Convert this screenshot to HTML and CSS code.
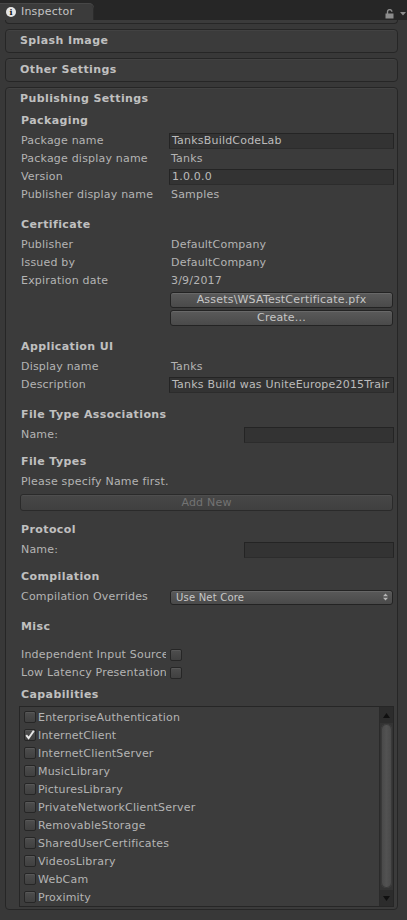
FILE: index.html
```html
<!DOCTYPE html>
<html>
<head>
<meta charset="utf-8">
<link rel="stylesheet" href="styles.css">
</head>
<body>
<div class="topbar">
  <div class="tab"><span class="info">i</span><span class="tab-label">Inspector</span></div>
  <div class="tools">
    <svg class="lock" width="10" height="10" viewBox="0 0 10 10"><path d="M2.5 5V2.8a2.2 2.2 0 0 1 4.4 0" fill="none" stroke="#8c8c8c" stroke-width="1.4"/><rect x="0.5" y="4.5" width="8" height="5" fill="#8c8c8c"/></svg>
    <svg class="menu" width="6" height="4" viewBox="0 0 6 4"><path d="M0 0H6L3 3.5Z" fill="#8c8c8c"/></svg>
  </div>
</div>
<div class="main">
  <div class="fold stub"></div>
  <div class="fold"><div class="fold-title">Splash Image</div></div>
  <div class="fold"><div class="fold-title">Other Settings</div></div>
  <div class="fold publishing">
    <div class="fold-title">Publishing Settings</div>
    <div class="content">
      <div class="h m3">Packaging</div>
      <div class="row m2"><span class="lbl">Package name</span><span class="field">TanksBuildCodeLab</span></div>
      <div class="row"><span class="lbl">Package display name</span><span class="val">Tanks</span></div>
      <div class="row"><span class="lbl">Version</span><span class="field">1.0.0.0</span></div>
      <div class="row"><span class="lbl">Publisher display name</span><span class="val">Samples</span></div>

      <div class="h m12">Certificate</div>
      <div class="row m2"><span class="lbl">Publisher</span><span class="val">DefaultCompany</span></div>
      <div class="row"><span class="lbl">Issued by</span><span class="val">DefaultCompany</span></div>
      <div class="row"><span class="lbl">Expiration date</span><span class="val">3/9/2017</span></div>
      <div class="row"><span class="lbl"></span><span class="btn">Assets\WSATestCertificate.pfx</span></div>
      <div class="row"><span class="lbl"></span><span class="btn">Create...</span></div>

      <div class="h m12">Application UI</div>
      <div class="row m2"><span class="lbl">Display name</span><span class="val">Tanks</span></div>
      <div class="row"><span class="lbl">Description</span><span class="field">Tanks Build was UniteEurope2015Trair</span></div>

      <div class="h m12">File Type Associations</div>
      <div class="row m2"><span class="lbl wide">Name:</span><span class="field empty"></span></div>

      <div class="h m9">File Types</div>
      <div class="row m2"><span class="lbl wide">Please specify Name first.</span></div>
      <div class="wide-btn">Add New</div>

      <div class="h m10">Protocol</div>
      <div class="row m2"><span class="lbl wide">Name:</span><span class="field empty"></span></div>

      <div class="h m9">Compilation</div>
      <div class="row m2"><span class="lbl">Compilation Overrides</span><span class="dropdown"><span>Use Net Core</span><svg width="5" height="8" viewBox="0 0 5 8"><path d="M0 3.2L2.5 0.5L5 3.2ZM0 4.8L2.5 7.5L5 4.8Z" fill="#b8b8b8"/></svg></span></div>

      <div class="h m12">Misc</div>
      <div class="row m10"><span class="lbl clip">Independent Input Source</span><span class="check"></span></div>
      <div class="row"><span class="lbl clip">Low Latency Presentation</span><span class="check"></span></div>

      <div class="h m4">Capabilities</div>
      <div class="list">
        <div class="items">
          <div class="item"><span class="check"></span>EnterpriseAuthentication</div>
          <div class="item"><span class="check on"><svg width="12" height="12" viewBox="0 0 12 12"><path d="M2.2 6.2L4.6 9.2L9.8 1.8" fill="none" stroke="#e8e8e8" stroke-width="2"/></svg></span>InternetClient</div>
          <div class="item"><span class="check"></span>InternetClientServer</div>
          <div class="item"><span class="check"></span>MusicLibrary</div>
          <div class="item"><span class="check"></span>PicturesLibrary</div>
          <div class="item"><span class="check"></span>PrivateNetworkClientServer</div>
          <div class="item"><span class="check"></span>RemovableStorage</div>
          <div class="item"><span class="check"></span>SharedUserCertificates</div>
          <div class="item"><span class="check"></span>VideosLibrary</div>
          <div class="item"><span class="check"></span>WebCam</div>
          <div class="item"><span class="check"></span>Proximity</div>
        </div>
        <div class="scrollbar">
          <div class="arrow up"><svg width="7" height="5" viewBox="0 0 7 5"><path d="M0 5L3.5 0L7 5Z" fill="#101010"/></svg></div>
          <div class="thumb"></div>
          <div class="arrow down"><svg width="7" height="5" viewBox="0 0 7 5"><path d="M0 0L3.5 5L7 0Z" fill="#101010"/></svg></div>
        </div>
      </div>
    </div>
  </div>
</div>
</body>
</html>
```
FILE: styles.css
```css
html, body {
  margin: 0;
  padding: 0;
}
body {
  width: 407px;
  height: 920px;
  overflow: hidden;
  background: #383838;
  font-family: "DejaVu Sans", "Noto Sans", sans-serif;
  font-size: 11px;
  letter-spacing: 0.2px;
  color: #b4b4b4;
}
.topbar {
  height: 20px;
  background: #262626;
  display: flex;
  align-items: flex-end;
}
.tab {
  width: 94px;
  height: 17px;
  box-sizing: border-box;
  background: #3b3b3b;
  border-radius: 0 5px 0 0;
  box-shadow: inset 0 1px 0 #474747, inset -1px 0 0 #2c2c2c;
  display: flex;
  align-items: center;
  padding-left: 6px;
  gap: 5px;
  color: #c4c4c4;
}
.info {
  width: 10px;
  height: 10px;
  border-radius: 50%;
  background: #e6e6e6;
  color: #111;
  font-weight: bold;
  font-size: 8px;
  line-height: 10px;
  text-align: center;
  letter-spacing: 0;
  font-family: "DejaVu Serif", serif;
}
.tab-label {
  line-height: 17px;
}
.tools {
  margin-left: auto;
  height: 20px;
  display: flex;
  align-items: center;
  gap: 5px;
  padding-right: 1px;
  padding-top: 7px;
  box-sizing: border-box;
}
.main {
  padding: 0 9px 0 5px;
}
.fold {
  border: 1px solid #262626;
  border-radius: 4px;
  background: #3b3b3b;
  box-shadow: inset 0 1px 0 #424242;
  margin-top: 5px;
}
.fold.stub {
  margin-top: 0;
  height: 3px;
  border-top: none;
  border-radius: 0 0 4px 4px;
  box-shadow: none;
}
.fold-title {
  line-height: 22px;
  height: 22px;
  padding-left: 14px;
  font-weight: bold;
  color: #c0c0c0;
  letter-spacing: 0.4px;
}
.content {
  padding: 0 3px 1px 15px;
}
.h {
  height: 18px;
  line-height: 18px;
  font-weight: bold;
  color: #c0c0c0;
  letter-spacing: 0.4px;
}
.m2 { margin-top: 2px; }
.m3 { margin-top: 2px; }
.m4 { margin-top: 4px; }
.m9 { margin-top: 9px; }
.m10 { margin-top: 10px; }
.m12 { margin-top: 12px; }
.row {
  height: 18px;
  line-height: 18px;
  display: flex;
  align-items: center;
  white-space: nowrap;
}
.lbl {
  width: 148px;
  flex: none;
}
.lbl.wide {
  width: 223px;
}
.lbl.clip {
  width: 145px;
  overflow: hidden;
  margin-right: 3px;
}
.val {
  padding-left: 2px;
}
.field {
  flex: 1;
  height: 16px;
  box-sizing: border-box;
  border: 1px solid #242424;
  border-bottom-color: #2c2c2c;
  background: #333333;
  line-height: 14px;
  padding-left: 2px;
  overflow: hidden;
  color: #bcbcbc;
}
.btn {
  flex: 1;
  margin-left: 1px;
  margin-right: 1px;
  height: 16px;
  margin-top: 2px;
  box-sizing: border-box;
  border: 1px solid #232323;
  border-radius: 3px;
  background: linear-gradient(#5a5a5a, #4a4a4a);
  box-shadow: inset 0 1px 0 #686868;
  line-height: 14px;
  text-align: center;
  color: #c6c6c6;
}
.wide-btn {
  margin: 3px 1px 0 -1px;
  height: 17px;
  box-sizing: border-box;
  border: 1px solid #2a2a2a;
  border-radius: 3px;
  background: linear-gradient(#474747, #404040);
  box-shadow: inset 0 1px 0 #4e4e4e;
  line-height: 15px;
  text-align: center;
  color: #737373;
}
.dropdown {
  flex: 1;
  margin-left: 1px;
  margin-right: 1px;
  height: 15px;
  box-sizing: border-box;
  border: 1px solid #232323;
  border-radius: 3px;
  background: linear-gradient(#595959, #4a4a4a);
  box-shadow: inset 0 1px 0 #666666;
  display: flex;
  align-items: center;
  justify-content: space-between;
  padding: 0 4px 0 5px;
  font-size: 10px;
  color: #c8c8c8;
  line-height: 13px;
}
.check {
  width: 12px;
  height: 12px;
  flex: none;
  box-sizing: border-box;
  border: 1px solid #262626;
  border-radius: 2px;
  background: linear-gradient(#4e4e4e, #404040);
  box-shadow: inset 0 1px 0 #585858;
  position: relative;
}
.check svg {
  position: absolute;
  left: -1px;
  top: -1px;
}
.row .check {
  margin-left: 1px;
}
.list {
  margin: 2px 0 1px -2px;
  height: 201px;
  box-sizing: border-box;
  border: 1px solid #262626;
  background: #3c3c3c;
  display: flex;
  overflow: hidden;
}
.items {
  flex: 1;
  padding: 1px 0 0 4px;
  overflow: hidden;
  border-right: 1px solid #2a2a2a;
}
.item {
  height: 18px;
  display: flex;
  align-items: center;
  gap: 2px;
  white-space: nowrap;
  color: #b4b4b4;
}
.scrollbar {
  width: 13px;
  flex: none;
  background: #333333;
  display: flex;
  flex-direction: column;
  align-items: center;
}
.arrow {
  width: 13px;
  height: 16px;
  display: flex;
  align-items: center;
  justify-content: center;
  background: #2c2c2c;
  flex: none;
}
.thumb {
  flex: 1;
  width: 11px;
  margin: 1px 0 2px;
  border-radius: 6px;
  background: linear-gradient(90deg, #484848, #525252 50%, #484848);
  box-shadow: inset 0 0 0 1px #3a3a3a;
}
```
